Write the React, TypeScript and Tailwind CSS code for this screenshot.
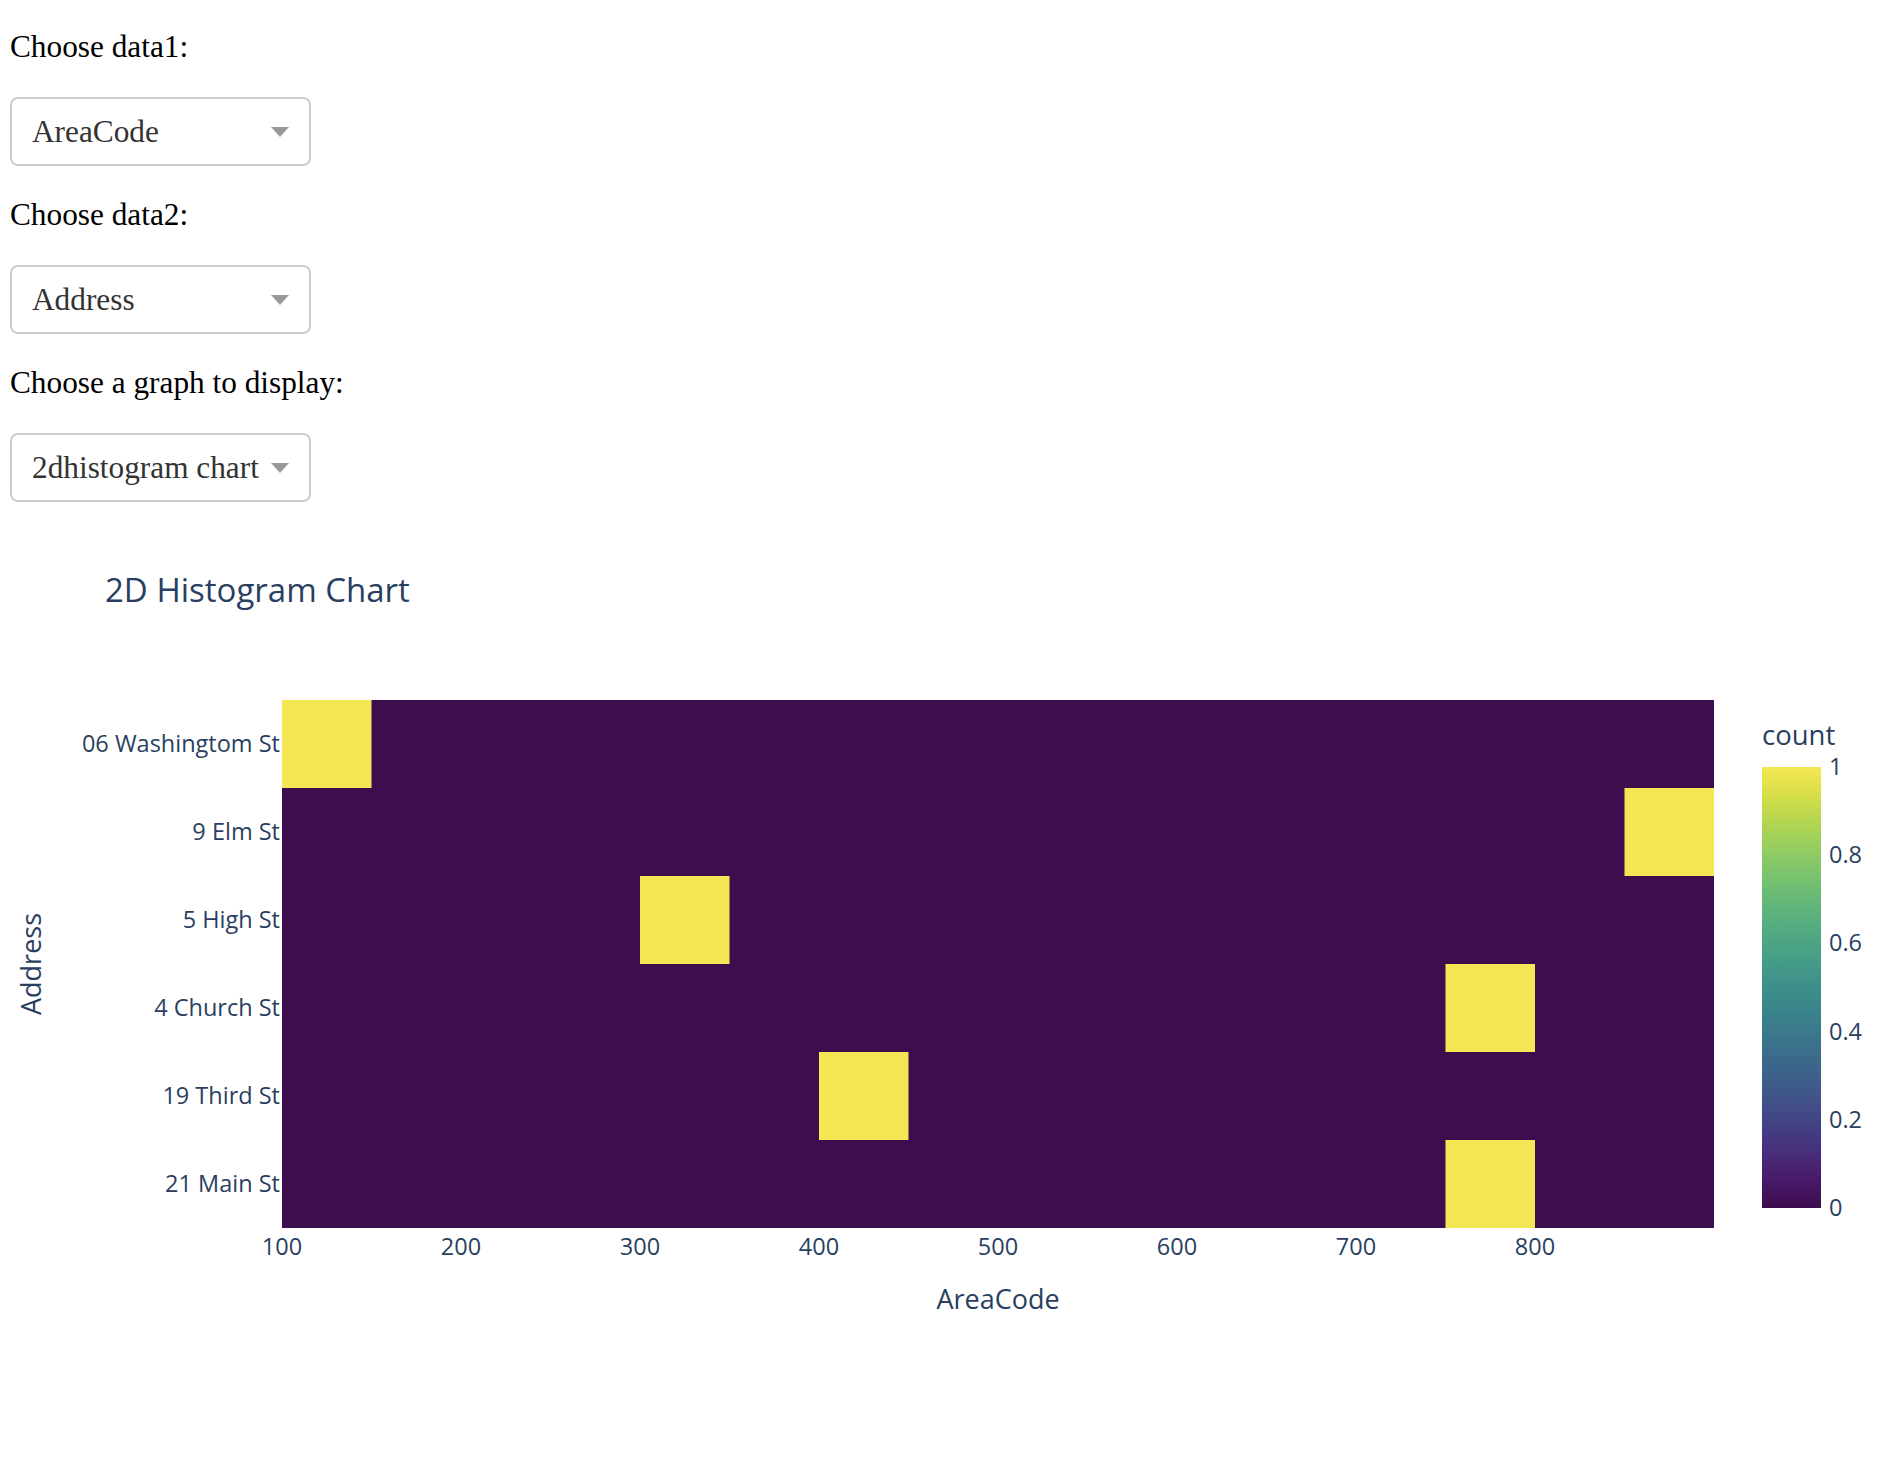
import React from "react";

type Option = {
  label: string;
  value: string;
};

const dropdowns: { title: string; selected: Option }[] = [
  { title: "Choose data1:", selected: { label: "AreaCode", value: "AreaCode" } },
  { title: "Choose data2:", selected: { label: "Address", value: "Address" } },
  {
    title: "Choose a graph to display:",
    selected: { label: "2dhistogram chart", value: "2dhistogram" },
  },
];

// rows top to bottom, with the x bin (50 wide, starting at 100) that holds the count
const rows = [
  { name: "06 Washingtom St", bin: 0 },
  { name: "9 Elm St", bin: 15 },
  { name: "5 High St", bin: 4 },
  { name: "4 Church St", bin: 13 },
  { name: "19 Third St", bin: 6 },
  { name: "21 Main St", bin: 13 },
];

const DARK = "#3e0d4e";
const YELLOW = "#f5e655";

function Dropdown({ option }: { option: Option }) {
  return (
    <div className="w-[301px] h-[69px] border-2 border-[#cccccc] rounded-[8px] pl-[20px] pr-[20px] flex items-center justify-between bg-white">
      <span className="text-[31.3px] text-[#333333] leading-none">{option.label}</span>
      <span className="w-0 h-0 border-t-[10px] border-t-[#999999] border-x-[9.5px] border-x-transparent" />
    </div>
  );
}

function HistogramChart() {
  const left = 282;
  const top = 180;
  const width = 1432;
  const height = 528;
  const binW = width / 16;
  const rowH = height / 6;
  const text = "#2a3f5f";
  const font = "'Open Sans', 'Liberation Sans', sans-serif";

  const xTicks = [100, 200, 300, 400, 500, 600, 700, 800];
  const cbTicks = ["1", "0.8", "0.6", "0.4", "0.2", "0"];
  const cbTop = 247;
  const cbBottom = 688;

  return (
    <svg width={1890} height={900} className="block mt-[18px]" fontFamily={font}>
      <defs>
        <linearGradient id="viridis" x1="0" y1="1" x2="0" y2="0">
          <stop offset="0" stopColor={DARK} />
          <stop offset="0.0627" stopColor="#48196a" />
          <stop offset="0.1255" stopColor="#472e7b" />
          <stop offset="0.1882" stopColor="#434185" />
          <stop offset="0.251" stopColor="#41548a" />
          <stop offset="0.3137" stopColor="#3d648b" />
          <stop offset="0.3765" stopColor="#3a738b" />
          <stop offset="0.4392" stopColor="#3a828b" />
          <stop offset="0.502" stopColor="#3d8f8a" />
          <stop offset="0.5647" stopColor="#459d87" />
          <stop offset="0.6275" stopColor="#52aa82" />
          <stop offset="0.6902" stopColor="#63b779" />
          <stop offset="0.7529" stopColor="#79c36e" />
          <stop offset="0.8157" stopColor="#95cd60" />
          <stop offset="0.8784" stopColor="#b5d650" />
          <stop offset="0.9412" stopColor="#d9df48" />
          <stop offset="1" stopColor={YELLOW} />
        </linearGradient>
      </defs>

      <text x={105} y={82} fontSize={33} fill={text}>
        2D Histogram Chart
      </text>

      <rect x={left} y={top} width={width} height={height} fill={DARK} />
      {rows.map((row, i) => (
        <rect
          key={row.name}
          x={left + row.bin * binW}
          y={top + i * rowH}
          width={binW}
          height={rowH}
          fill={YELLOW}
        />
      ))}

      {rows.map((row, i) => (
        <text
          key={row.name}
          x={280}
          y={top + i * rowH + rowH / 2 + 8}
          fontSize={23.5}
          fill={text}
          textAnchor="end"
        >
          {row.name}
        </text>
      ))}

      {xTicks.map((v) => (
        <text
          key={v}
          x={left + ((v - 100) / 800) * width}
          y={735}
          fontSize={23.5}
          fill={text}
          textAnchor="middle"
        >
          {v}
        </text>
      ))}

      <text x={998} y={789} fontSize={27} fill={text} textAnchor="middle">
        AreaCode
      </text>
      <text
        x={41}
        y={444}
        fontSize={27}
        fill={text}
        textAnchor="middle"
        transform="rotate(-90 41 444)"
      >
        Address
      </text>

      <text x={1762} y={225} fontSize={27.5} fill={text}>
        count
      </text>
      <rect x={1762} y={cbTop} width={59} height={cbBottom - cbTop} fill="url(#viridis)" />
      {cbTicks.map((t, i) => (
        <text
          key={t}
          x={1829}
          y={cbTop + (i * (cbBottom - cbTop)) / 5 + 8}
          fontSize={23.5}
          fill={text}
        >
          {t}
        </text>
      ))}
    </svg>
  );
}

export default function App() {
  return (
    <div className="bg-white min-h-screen">
      <div className="pl-[10px] pt-[29px] font-['Liberation_Serif',serif]">
        {dropdowns.map((d, i) => (
          <div key={d.title} className={i > 0 ? "mt-[31px]" : ""}>
            <div className="h-[36px] leading-[36px] text-[31.3px] text-black">{d.title}</div>
            <div className="mt-[32px]">
              <Dropdown option={d.selected} />
            </div>
          </div>
        ))}
      </div>
      <HistogramChart />
    </div>
  );
}
